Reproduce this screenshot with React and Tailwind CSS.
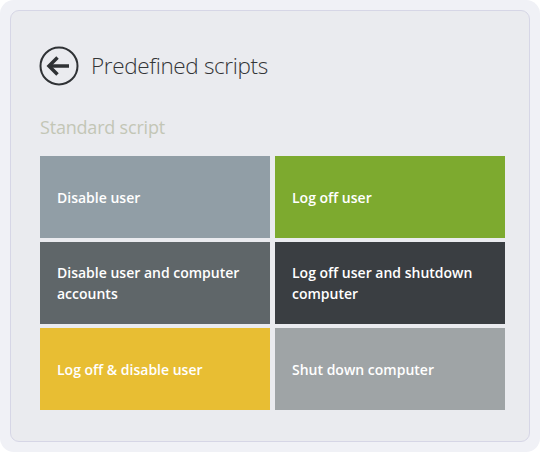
import React from "react";

const tiles = [
  { label: "Disable user", bg: "bg-[#919ea6]" },
  { label: "Log off user", bg: "bg-[#7daa2f]" },
  { label: "Disable user and computer accounts", bg: "bg-[#5f6669]" },
  { label: "Log off user and shutdown computer", bg: "bg-[#3a3e42]" },
  { label: "Log off & disable user", bg: "bg-[#e8be33]" },
  { label: "Shut down computer", bg: "bg-[#9fa4a6]" },
];

function BackIcon() {
  return (
    <svg width="40" height="40" viewBox="0 0 40 40" fill="none">
      <circle cx="20" cy="20" r="18.5" stroke="#2f3235" strokeWidth="2" />
      <path d="M30 20H10" stroke="#2f3235" strokeWidth="3.5" />
      <path d="M18.5 11.5L10 20l8.5 8.5" stroke="#2f3235" strokeWidth="3.5" strokeLinejoin="miter" />
    </svg>
  );
}

export default function App() {
  return (
    <div className="w-[540px] h-[452px] bg-white">
      <div className="h-full rounded-[14px] bg-[#f0f1f6] p-[10px]">
        <div
          className="h-full rounded-[9px] border border-[#d6d6e6] bg-[#eaebef] pl-[28px] pr-[24px] pt-[35px]"
          style={{ fontFamily: '"Open Sans", "Noto Sans", sans-serif' }}
        >
          <div className="flex items-center gap-[12px] h-[40px]">
            <BackIcon />
            <span className="text-[22.5px] font-light text-[#333537] tracking-[-0.35px] leading-none">
              Predefined scripts
            </span>
          </div>
          <div className="mt-[32px] text-[18px] text-[#c3c6b6] leading-none pl-[1px] tracking-[-0.2px]">
            Standard script
          </div>
          <div className="mt-[20px] ml-[1px] grid grid-cols-[230px_230px] gap-x-[5px] gap-y-[4px]">
            {tiles.map((t) => (
              <div
                key={t.label}
                className={`${t.bg} h-[82px] flex items-center pl-[17px] pr-[14px] text-white text-[14px] font-semibold leading-[21px]`}
              >
                {t.label}
              </div>
            ))}
          </div>
        </div>
      </div>
    </div>
  );
}
